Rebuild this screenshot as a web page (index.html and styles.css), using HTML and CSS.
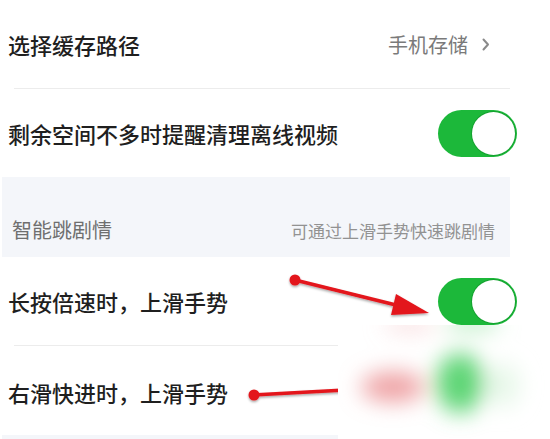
FILE: index.html
```html
<!DOCTYPE html>
<html lang="zh-CN">
  <head>
    <meta charset="UTF-8" />
    <meta name="viewport" content="width=device-width, initial-scale=1.0" />
    <title>缓存设置</title>
    <link rel="stylesheet" href="styles.css">
  </head>
  <body>
    <div class="screen">
      <!-- 缓存路径 -->
      <div class="row">
        <span class="label">选择缓存路径</span>
        <span class="value">
          手机存储
          <svg class="chevron" width="8" height="13" viewBox="0 0 8 13">
            <path d="M1.5 1.5 L6 6.5 L1.5 11.5" fill="none" stroke="#8a8a8a" stroke-width="2" stroke-linecap="round" stroke-linejoin="round" />
          </svg>
        </span>
      </div>
      <div class="divider"></div>
      <div class="row">
        <span class="label">剩余空间不多时提醒清理离线视频</span>
        <span class="switch on"><span class="knob"></span></span>
      </div>

      <!-- 智能跳剧情 -->
      <div class="section-head">
        <span class="section-title">智能跳剧情</span>
        <span class="section-hint">可通过上滑手势快速跳剧情</span>
      </div>
      <div class="row">
        <span class="label">长按倍速时，上滑手势</span>
        <span class="switch on"><span class="knob"></span></span>
      </div>
      <div class="divider"></div>
      <div class="row row-last">
        <span class="label">右滑快进时，上滑手势</span>
      </div>
      <div class="section-foot"></div>
    </div>

    <!-- 标注箭头 -->
    <svg class="marks" width="550" height="439" viewBox="0 0 550 439">
      <defs>
        <filter id="shadow" x="-10%" y="-50%" width="120%" height="200%">
          <feDropShadow dx="0" dy="1.5" stdDeviation="1.2" flood-color="#000" flood-opacity="0.35" />
        </filter>
      </defs>
      <g filter="url(#shadow)" fill="#e3141b" stroke="#e3141b">
        <line x1="295" y1="280" x2="400" y2="306" stroke-width="3.5" />
        <circle cx="295" cy="280" r="5.5" stroke="none" />
        <polygon points="429,313 396,294 391,315" stroke="none" />
        <line x1="253" y1="395" x2="345" y2="390" stroke-width="3.5" />
        <circle cx="254" cy="395" r="5.5" stroke="none" />
      </g>
    </svg>

    <!-- 模糊遮挡 -->
    <div class="blur-box">
      <svg width="212" height="114" viewBox="0 0 212 114">
        <defs>
          <filter id="soft" x="-100%" y="-100%" width="300%" height="300%">
            <feGaussianBlur stdDeviation="11" />
          </filter>
        </defs>
        <g filter="url(#soft)">
          <ellipse cx="55" cy="62" rx="32" ry="15" fill="#eea0a3" />
          <ellipse cx="122" cy="58" rx="24" ry="30" fill="#5fd576" />
          <ellipse cx="165" cy="60" rx="16" ry="22" fill="#e6f7e8" />
          <ellipse cx="72" cy="0" rx="26" ry="5" fill="#f6cfd0" />
          <ellipse cx="134" cy="-2" rx="28" ry="6" fill="#a6e8b1" />
        </g>
      </svg>
    </div>
  </body>
</html>
```

FILE: styles.css
```css
body {
  margin: 0;
  background: #ffffff;
  font-family: "Noto Sans CJK SC", "Noto Sans", sans-serif;
  color: #222222;
  position: relative;
  width: 550px;
  height: 439px;
  overflow: hidden;
}

.screen {
  width: 508px;
  margin-left: 2px;
}

.row {
  display: flex;
  align-items: center;
  justify-content: space-between;
  height: 88px;
  padding: 0 0 0 6px;
}

.label {
  font-size: 22px;
  line-height: 1;
  font-weight: 500;
  color: #1f1f1f;
}

.value {
  display: flex;
  align-items: center;
  gap: 14px;
  font-size: 20px;
  color: #7a7a7a;
  margin-right: 20px;
}

.chevron {
  display: block;
}

.divider {
  height: 1px;
  background: #ececec;
  margin-left: 12px;
}

.switch {
  position: relative;
  width: 79px;
  height: 47px;
  border-radius: 24px;
  margin-right: -7px;
  box-sizing: border-box;
}

.switch.on {
  background: #1cb83a;
}

.knob {
  position: absolute;
  top: 2px;
  right: 2px;
  width: 43px;
  height: 43px;
  border-radius: 50%;
  background: #ffffff;
  box-shadow: 0 0 0 1px #14a22f;
}

.section-head {
  display: flex;
  align-items: flex-end;
  justify-content: space-between;
  height: 80px;
  box-sizing: border-box;
  padding: 0 15px 13px 10px;
  background: #f4f6fa;
}

.section-title {
  font-size: 20px;
  color: #6f6f6f;
}

.section-hint {
  font-size: 17px;
  color: #929292;
  padding-bottom: 1px;
}

.row-last {
  height: 89px;
  padding-top: 2px;
  box-sizing: border-box;
}

.section-foot {
  height: 8px;
  background: #f4f6fa;
}

.marks {
  position: absolute;
  left: 0;
  top: 0;
  pointer-events: none;
}

.blur-box {
  position: absolute;
  left: 338px;
  top: 325px;
  width: 212px;
  height: 114px;
  background: #ffffff;
}

.blur-box svg {
  display: block;
}
```
